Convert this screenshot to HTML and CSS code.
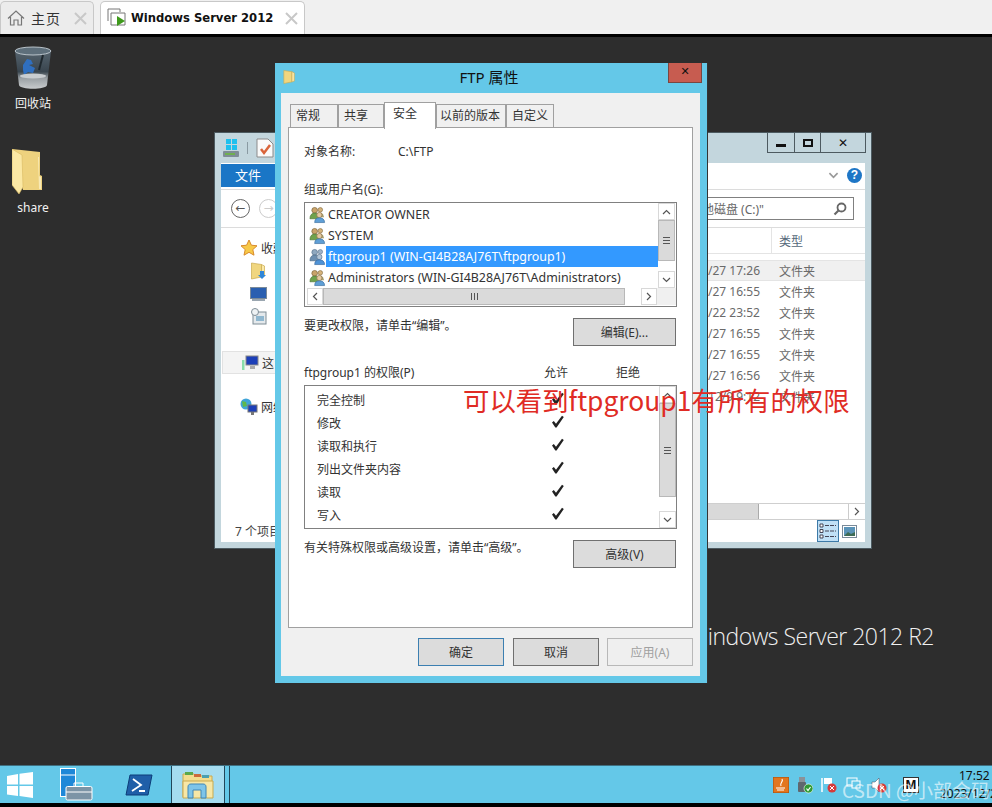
FILE: index.html
```html
<!DOCTYPE html>
<html lang="zh">
<head>
<meta charset="utf-8">
<title>Windows Server 2012</title>
<link rel="stylesheet" href="styles.css">
</head>
<body>
<svg class="defs" width="0" height="0">
  <defs>
    <linearGradient id="bin-body" x1="0" y1="0" x2="0" y2="1">
      <stop offset="0" stop-color="#55636e"/>
      <stop offset=".55" stop-color="#39454e"/>
      <stop offset=".72" stop-color="#9aa0a4"/>
      <stop offset="1" stop-color="#c8cbcd"/>
    </linearGradient>
    <symbol id="group" viewBox="0 0 18 18">
      <circle cx="6" cy="4" r="3" fill="#c9a36a" stroke="#7a6136" stroke-width=".7"/>
      <path d="M1 13c0-4 2-6 5-6s5 2 5 6z" fill="#6fa24c" stroke="#4c7333" stroke-width=".7"/>
      <circle cx="12" cy="3.5" r="2.4" fill="#d4b27a" stroke="#7a6136" stroke-width=".6"/>
      <path d="M9 7.500c1-1 5-1.500 6 1l1 3H11z" fill="#a8a070"/>
      <circle cx="11" cy="9" r="2.800" fill="#e3c9a0" stroke="#8a6d45" stroke-width=".7"/>
      <path d="M6 17c0-3.500 2-5 5-5s5.500 1.500 5.500 5z" fill="#5f9fd6" stroke="#3b6f9f" stroke-width=".7"/>
    </symbol>
    <symbol id="group-sel" viewBox="0 0 18 18">
      <circle cx="6" cy="4" r="3" fill="#8fa8bf" stroke="#56708a" stroke-width=".7"/>
      <path d="M1 13c0-4 2-6 5-6s5 2 5 6z" fill="#6d8fb0" stroke="#4a6885" stroke-width=".7"/>
      <circle cx="12" cy="3.5" r="2.400" fill="#9fb3c6" stroke="#56708a" stroke-width=".6"/>
      <circle cx="11" cy="9" r="2.800" fill="#b3c5d6" stroke="#56708a" stroke-width=".7"/>
      <path d="M6 17c0-3.500 2-5 5-5s5.500 1.500 5.500 5z" fill="#4f93d6" stroke="#36689f" stroke-width=".7"/>
    </symbol>
    <symbol id="check" viewBox="0 0 14 14">
      <path d="M1 7.500 2.800 6 5 8.800 11 .8 12.800 2 5.600 12.500H4.300z" fill="#222"/>
    </symbol>
    <symbol id="up" viewBox="0 0 9 6"><path d="M1 5 4.500 1.500 8 5" fill="none" stroke="#555" stroke-width="1.200"/></symbol>
    <symbol id="down" viewBox="0 0 9 6"><path d="M1 1 4.500 4.500 8 1" fill="none" stroke="#555" stroke-width="1.200"/></symbol>
    <symbol id="left" viewBox="0 0 6 9"><path d="M5 1 1.500 4.500 5 8" fill="none" stroke="#555" stroke-width="1.200"/></symbol>
    <symbol id="right" viewBox="0 0 6 9"><path d="M1 1 4.500 4.500 1 8" fill="none" stroke="#555" stroke-width="1.200"/></symbol>
    <symbol id="folder" viewBox="0 0 16 18">
      <path d="M1 1 11 2.500V15L1 17z" fill="#f0d67f" stroke="#c8a94e" stroke-width=".7"/>
      <path d="M11 2.500 14 4V14L11 15z" fill="#fbe9a8" stroke="#c8a94e" stroke-width=".7"/>
    </symbol>
  </defs>
</svg>

<header class="tabbar">
  <div class="tab tab-home">
    <svg class="tab-icon" width="18" height="18" viewBox="0 0 18 18"><path d="M1 9.500 9 2l8 7.500M3.500 8v8H7v-5h4v5h3.500V8" fill="none" stroke="#777" stroke-width="1.200"/></svg>
    <span class="tab-title-home">主页</span>
    <svg class="tab-x" width="13" height="13" viewBox="0 0 13 13"><path d="M1 1l11 11M12 1 1 12" stroke="#c8c8c8" stroke-width="2"/></svg>
  </div>
  <div class="tab tab-active">
    <svg class="tab-icon" width="20" height="20" viewBox="0 0 20 20"><path d="M1 13V1h12v3" fill="none" stroke="#777" stroke-width="1"/><path d="M4 17V5h14v12z" fill="#fff" stroke="#777" stroke-width="1"/><path d="M10 8v10l8-5z" fill="#3f9a1c"/></svg>
    <span class="tab-title">Windows Server 2012</span>
    <svg class="tab-x" width="13" height="13" viewBox="0 0 13 13"><path d="M1 1l11 11M12 1 1 12" stroke="#c8c8c8" stroke-width="2"/></svg>
  </div>
</header>

<main class="desktop">
  <div class="desk-icon desk-bin">
    <svg width="38" height="45" viewBox="0 0 38 45">
      <path d="M1 5 5 39c1 5 27 5 28 0L37 5z" fill="url(#bin-body)"/>
      <ellipse cx="19" cy="5" rx="18" ry="4" fill="#5e6f7b" stroke="#b9c3ca"/>
      <path d="M9 19l4-6 4 1 2 4-4 1 6 3-2 5-5-1-4 3-1-5z" fill="#2f6fc0"/>
      <path d="M29 9 25 24" stroke="#1f282e" stroke-width="2"/>
      <ellipse cx="19" cy="30" rx="13" ry="2.500" fill="#c9cdd0"/>
    </svg>
    <span>回收站</span>
  </div>
  <div class="desk-icon desk-share">
    <svg width="32" height="46" viewBox="0 0 32 46">
      <path d="M0 0 28 3V26L30 27V41H11z" fill="#eed27e"/>
      <path d="M27 8V27L29 28V40H27L26 8z" fill="#f8e9b4"/>
      <path d="M0 0 10 6 11 38 7 45 0 36z" fill="#fbe8a4" stroke="#d8b85f" stroke-width=".6"/>
    </svg>
    <span>share</span>
  </div>

  <section class="explorer">
    <div class="ex-title">
      <svg class="ex-qa" width="18" height="20" viewBox="0 0 18 20"><path d="M4 1h5v5H4zM10 1h5v5h-5zM4 7h5v5H4zM10 7h5v5h-5z" fill="#1ec0ee"/><rect x="1" y="13" width="16" height="6" rx="1" fill="#7e8d96"/><rect x="3" y="15" width="10" height="2" fill="#6fb050"/></svg>
      <span class="ex-sep"></span>
      <svg width="18" height="20" viewBox="0 0 18 20"><path d="M1 1h11l5 5v13H1z" fill="#fafafa" stroke="#8b8b8b"/><path d="M5 11l3 4 6-8" fill="none" stroke="#d9643a" stroke-width="2.500"/></svg>
      <div class="ex-btns">
        <span class="ex-btn ex-min"><i></i></span>
        <span class="ex-btn ex-max"><i></i></span>
        <span class="ex-btn ex-close">✕</span>
      </div>
    </div>
    <div class="ex-body">
      <div class="ex-ribbon">
        <span class="ex-file">文件</span>
        <svg class="ex-chev" width="11" height="7" viewBox="0 0 9 6"><path d="M1 1 4.500 4.500 8 1" fill="none" stroke="#999" stroke-width="1.400"/></svg>
        <span class="ex-help">?</span>
      </div>
      <div class="ex-address">
        <span class="nav-circle">←</span>
        <span class="nav-circle nav-off">→</span>
        <div class="ex-search">
          <span>本地磁盘 (C:)"</span>
          <svg width="14" height="14" viewBox="0 0 14 14"><circle cx="8.500" cy="5.500" r="4" fill="none" stroke="#666" stroke-width="1.800"/><path d="M5.500 8.500 1.500 12.500" stroke="#666" stroke-width="2.200"/></svg>
        </div>
      </div>
      <div class="ex-main">
        <nav class="ex-nav">
          <div class="nav-row nav-top">
            <svg width="18" height="17" viewBox="0 0 18 17"><path d="M9 1l2.400 5.200 5.600.6-4.200 3.800 1.200 5.600L9 13.300 4 16.200l1.200-5.600L1 6.800l5.600-.6z" fill="#f7c948" stroke="#d88a2c"/></svg>
            <span>收藏夹</span>
          </div>
          <div class="nav-row nav-sub">
            <svg width="17" height="18" viewBox="0 0 17 18"><use href="#folder"/><path d="M10 9h4v4h2l-4 4-4-4h2z" fill="#2f86d8"/></svg>
          </div>
          <div class="nav-row nav-sub">
            <svg width="17" height="14" viewBox="0 0 17 14"><rect x=".5" y=".5" width="16" height="11" fill="#2a5fb0" stroke="#7a8a99"/><rect x="2" y="12" width="13" height="2" fill="#9aa6b0"/></svg>
          </div>
          <div class="nav-row nav-sub">
            <svg width="17" height="17" viewBox="0 0 17 17"><rect x="3" y="4" width="13" height="12" fill="#e4e9ec" stroke="#7f8d96"/><circle cx="5" cy="4" r="3.500" fill="#eef2f4" stroke="#7f8d96"/><rect x="6" y="8" width="8" height="5" fill="#8fb7cf"/></svg>
          </div>
          <div class="nav-row nav-pc">
            <svg width="18" height="16" viewBox="0 0 18 16"><rect x="5" y="1" width="12" height="9" fill="#1c3fb8" stroke="#888"/><rect x="9" y="11" width="5" height="3" fill="#aaa"/><rect x="1" y="5" width="2.500" height="10" fill="#8da"/></svg>
            <span>这台电脑</span>
          </div>
          <div class="nav-row nav-net">
            <svg width="18" height="18" viewBox="0 0 18 18"><circle cx="6" cy="6" r="5.500" fill="#3fa4d8"/><path d="M2 3l4 1 1 4-4 1z" fill="#5fb84a"/><rect x="8" y="7" width="9" height="7" fill="#1c3fb8" stroke="#777"/><rect x="11" y="14" width="3" height="3" fill="#777"/></svg>
            <span>网络</span>
          </div>
        </nav>
        <div class="ex-files">
          <div class="ex-head"><span class="ex-col-date">修改日期</span><span class="ex-col-type">类型</span></div>
          <ul class="ex-rows">
            <li class="ex-row ex-row-sel"><span class="ex-date">2023/12/27 17:26</span><span>文件夹</span></li>
            <li class="ex-row"><span class="ex-date">2023/12/27 16:55</span><span>文件夹</span></li>
            <li class="ex-row"><span class="ex-date ex-date-s">2013/8/22 23:52</span><span>文件夹</span></li>
            <li class="ex-row"><span class="ex-date">2023/12/27 16:55</span><span>文件夹</span></li>
            <li class="ex-row"><span class="ex-date">2023/12/27 16:55</span><span>文件夹</span></li>
            <li class="ex-row"><span class="ex-date">2023/12/27 16:56</span><span>文件夹</span></li>
            <li class="ex-row"><span class="ex-date">2023/12/9 9:12</span><span>文件夹</span></li>
          </ul>
          <div class="ex-hscroll">
            <span class="ex-hthumb"></span>
            <span class="ex-hbtn"><svg width="6" height="9"><use href="#right"/></svg></span>
          </div>
        </div>
      </div>
      <div class="ex-status">
        <span class="ex-count">7 个项目</span>
        <span class="view-btn view-on">
          <svg width="18" height="16" viewBox="0 0 18 16"><path d="M1 1h3v3H1zM1 6.500h3v3H1zM1 12h3v3H1z" fill="#fff" stroke="#445"/><path d="M6 2.500h11M6 8h11M6 13.500h11" stroke="#445" stroke-dasharray="4 1"/></svg>
        </span>
        <span class="view-btn view-img">
          <svg width="15" height="13" viewBox="0 0 15 13"><rect x=".5" y=".5" width="14" height="12" fill="#fff" stroke="#7a8a99"/><rect x="2" y="2" width="11" height="9" fill="#5a93b8"/><path d="M2 11l4-4 3 2 4-2v4z" fill="#3e6b54"/></svg>
        </span>
      </div>
    </div>
  </section>

  <div class="brand">Windows Server 2012 R2</div>

  <section class="dialog">
    <div class="dlg-title">
      <svg class="dlg-icon" width="13" height="16" viewBox="0 0 16 18"><use href="#folder"/></svg>
      <span class="dlg-name">FTP 属性</span>
      <span class="dlg-close">✕</span>
    </div>
    <div class="dlg-client">
      <div class="tabs">
        <span class="dtab dtab-a">常规</span>
        <span class="dtab dtab-b">共享</span>
        <span class="dtab dtab-on">安全</span>
        <span class="dtab dtab-c">以前的版本</span>
        <span class="dtab dtab-d">自定义</span>
      </div>
      <div class="panel">
        <div class="obj-row"><span class="obj-label">对象名称:</span><span>C:\FTP</span></div>
        <div class="lbl-group">组或用户名(G):</div>
        <div class="listbox users">
          <div class="users-top">
            <ul class="user-rows">
              <li class="user"><svg width="17" height="18"><use href="#group"/></svg><span class="user-name">CREATOR OWNER</span></li>
              <li class="user"><svg width="17" height="18"><use href="#group"/></svg><span class="user-name">SYSTEM</span></li>
              <li class="user"><svg width="17" height="18"><use href="#group-sel"/></svg><span class="user-name user-sel">ftpgroup1 (WIN-GI4B28AJ76T\ftpgroup1)</span></li>
              <li class="user"><svg width="17" height="18"><use href="#group"/></svg><span class="user-name">Administrators (WIN-GI4B28AJ76T\Administrators)</span></li>
            </ul>
            <div class="vscroll vs-users">
              <span class="sb-btn"><svg width="9" height="6"><use href="#up"/></svg></span>
              <span class="sb-thumb sb-thumb-users"><i></i></span>
              <span class="sb-track"></span>
              <span class="sb-btn"><svg width="9" height="6"><use href="#down"/></svg></span>
            </div>
          </div>
          <div class="hscroll">
            <span class="hs-btn"><svg width="6" height="9"><use href="#left"/></svg></span>
            <span class="hs-thumb"><i></i></span>
            <span class="hs-track"></span>
            <span class="hs-btn"><svg width="6" height="9"><use href="#right"/></svg></span>
            <span class="hs-corner"></span>
          </div>
        </div>
        <div class="action-row">
          <span class="action-text">要更改权限，请单击“编辑”。</span>
          <span class="btn btn-wide">编辑(E)...</span>
        </div>
        <div class="perm-head">
          <span class="perm-title">ftpgroup1 的权限(P)</span>
          <span class="perm-allow">允许</span>
          <span>拒绝</span>
        </div>
        <div class="listbox perms">
          <ul class="perm-rows">
            <li class="perm"><span class="perm-name">完全控制</span><svg width="14" height="14"><use href="#check"/></svg></li>
            <li class="perm"><span class="perm-name">修改</span><svg width="14" height="14"><use href="#check"/></svg></li>
            <li class="perm"><span class="perm-name">读取和执行</span><svg width="14" height="14"><use href="#check"/></svg></li>
            <li class="perm"><span class="perm-name">列出文件夹内容</span><svg width="14" height="14"><use href="#check"/></svg></li>
            <li class="perm"><span class="perm-name">读取</span><svg width="14" height="14"><use href="#check"/></svg></li>
            <li class="perm"><span class="perm-name">写入</span><svg width="14" height="14"><use href="#check"/></svg></li>
          </ul>
          <div class="vscroll vs-perms">
            <span class="sb-btn"><svg width="9" height="6"><use href="#up"/></svg></span>
            <span class="sb-thumb sb-thumb-perms"><i></i></span>
            <span class="sb-track"></span>
            <span class="sb-btn"><svg width="9" height="6"><use href="#down"/></svg></span>
          </div>
        </div>
        <div class="action-row">
          <span class="action-text">有关特殊权限或高级设置，请单击“高级”。</span>
          <span class="btn btn-wide">高级(V)</span>
        </div>
      </div>
      <div class="dlg-foot">
        <span class="btn btn-foot btn-default">确定</span>
        <span class="btn btn-foot">取消</span>
        <span class="btn btn-foot btn-disabled">应用(A)</span>
      </div>
    </div>
  </section>

  <div class="note">可以看到ftpgroup1有所有的权限</div>
</main>

<footer class="taskbar">
  <svg class="tb-start" width="28" height="26" viewBox="0 0 28 26"><path d="M1 4l11-2v10.500H1zM13.500 1.800 27 0v12.500H13.500zM1 14h11v10L1 22.500zM13.500 14H27v12l-13.500-2z" fill="#fff"/></svg>
  <svg class="tb-server" width="33" height="33" viewBox="0 0 33 33"><rect x=".5" y=".5" width="15" height="28" fill="#1e88d8" stroke="#fff"/><path d="M1 7h14" stroke="#fff"/><rect x="6" y="18.500" width="26" height="13.500" rx="1.500" fill="#7c94a6" stroke="#fff"/><path d="M14 18v-3h9v3M6 24h26" fill="none" stroke="#fff"/></svg>
  <svg class="tb-ps" width="28" height="22" viewBox="0 0 28 22"><path d="M5 1h22l-4 20H1z" fill="#1f5fa8" stroke="#0c3d78"/><path d="M8 5l8 6-9 6M14 17h6" fill="none" stroke="#fff" stroke-width="1.800"/></svg>
  <div class="tb-active">
    <svg width="32" height="29" viewBox="0 0 32 29"><path d="M1 4h11l2 2h16v21H1z" fill="#f3dd8f" stroke="#c9a94f"/><path d="M3 2h8v3H3z" fill="#5ba84a"/><path d="M12 4h7v3h-7z" fill="#cc6a3c"/><path d="M20 5h7v3h-7z" fill="#4b9fb0"/><path d="M1 11h30v17H1z" fill="#f7e7a6" stroke="#c9a94f"/><path d="M6 28V17c0-2 1-3 3-3h12c2 0 3 1 3 3v11h-5v-8h-8v8z" fill="#7ec4e8" stroke="#3f86b8"/></svg>
  </div>
  <span class="tb-rule"></span>
  <div class="tray">
    <svg class="tr-java" width="16" height="16" viewBox="0 0 16 16"><rect width="16" height="16" rx="1" fill="#e2761e" stroke="#a04c0c"/><path d="M9 2c2 3-3 4-1 7M3 11h9M4 13h7" fill="none" stroke="#fff" stroke-width="1.200"/></svg>
    <svg class="tr-usb" width="16" height="18" viewBox="0 0 16 18"><rect x="2" y="1" width="6" height="5" fill="#8a9299"/><rect x="1" y="6" width="8" height="10" rx="1" fill="#5f676e"/><circle cx="11.500" cy="12.500" r="4.500" fill="#2f9a35" stroke="#fff" stroke-width=".6"/><path d="M9.500 12.500l1.500 2 2.500-3.500" fill="none" stroke="#fff" stroke-width="1.200"/></svg>
    <svg class="tr-flag" width="16" height="16" viewBox="0 0 16 16"><path d="M1 1v14" stroke="#fff" stroke-width="1.500"/><path d="M3 1h8v6H3z" fill="#fff"/><circle cx="11" cy="11" r="4.500" fill="#d63a3a"/><path d="M9 9l4 4M13 9l-4 4" stroke="#fff"/></svg>
    <svg class="tr-net" width="16" height="16" viewBox="0 0 16 16"><rect x="1" y="1" width="10" height="8" fill="none" stroke="#fff"/><rect x="6" y="4" width="8" height="7" fill="#64c8e8" stroke="#fff"/></svg>
    <svg class="tr-sound" width="16" height="16" viewBox="0 0 16 16"><path d="M1 5h3l4-4v14l-4-4H1z" fill="#fff" stroke="#445" stroke-width=".5"/><circle cx="11" cy="11" r="4.500" fill="#d63a3a"/><path d="M9 9l4 4M13 9l-4 4" stroke="#fff"/></svg>
    <span class="tr-m">M</span>
  </div>
  <div class="clock"><span class="clock-time">17:52</span><span class="clock-date">2023/12/27</span></div>
  <span class="watermark">CSDN @小部会码</span>
</footer>
</body>
</html>
```
FILE: styles.css
```css
* { box-sizing: border-box; }
html, body { margin: 0; padding: 0; }
body {
  width: 992px;
  height: 807px;
  overflow: hidden;
  position: relative;
  display: flex;
  flex-direction: column;
  background: #000;
  font-family: "Noto Sans", "Noto Sans CJK SC", sans-serif;
  font-size: 12px;
  color: #333;
}
ul { list-style: none; margin: 0; padding: 0; }
.defs { position: absolute; }

/* VM tabs */
.tabbar {
  height: 34px;
  flex: none;
  background: #f0f0f0;
  display: flex;
  align-items: flex-end;
  gap: 6px;
}
.tab {
  height: 33px;
  display: flex;
  align-items: center;
  border: 1px solid #c8c8c8;
  border-bottom: 0;
  border-radius: 5px 5px 0 0;
}
.tab-home { width: 94px; background: #ececec; padding-left: 6px; }
.tab-active { width: 205px; background: #fff; padding-left: 6px; }
.tab-icon { flex: none; }
.tab-title-home { margin-left: 6px; font: 14px "Noto Sans CJK SC", sans-serif; letter-spacing: 1px; color: #333; }
.tab-title { margin-left: 4px; font: bold 11.6px "DejaVu Sans", sans-serif; color: #111; white-space: nowrap; }
.tab-x { flex: none; margin-left: auto; margin-right: 6px; }

/* desktop canvas */
.desktop {
  position: relative;
  flex: none;
  margin-top: 3px;
  height: 728px;
  background: #2d2d2d;
  overflow: hidden;
}
.desk-icon {
  position: absolute;
  display: flex;
  flex-direction: column;
  align-items: center;
  width: 60px;
  color: #f2f2f2;
  font-size: 12px;
  line-height: 16px;
}
.desk-bin { left: 3px; top: 9px; }
.desk-bin span { margin-top: 5px; }
.desk-share { left: 3px; top: 112px; }
.desk-share svg { margin-right: 10px; }
.desk-share span { margin-top: 5px; }

/* explorer behind */
.explorer {
  position: absolute;
  left: 214px;
  top: 95px;
  width: 658px;
  height: 417px;
  background: #c3d6dd;
  border: 1px solid #4c5a60;
  padding: 0 6px 6px;
  display: flex;
  flex-direction: column;
  color: #444;
}
.ex-title { height: 30px; flex: none; display: flex; align-items: center; padding-left: 1px; }
.ex-sep { width: 1px; height: 12px; background: #8a9aa2; margin: 0 8px 0 7px; }
.ex-btns { margin-left: auto; margin-right: -1px; margin-bottom: 9px; align-self: flex-start; display: flex; }
.ex-btn {
  height: 20px;
  border: 1px solid #4d5a60;
  border-top: 0;
  margin-left: -1px;
  display: flex;
  align-items: center;
  justify-content: center;
  color: #111;
}
.ex-min { width: 28px; margin-left: 0; }
.ex-min i { width: 10px; height: 3px; background: #111; margin-top: 6px; }
.ex-max { width: 27px; }
.ex-max i { width: 10px; height: 8px; border: 2px solid #111; }
.ex-close { width: 46px; font: bold 12px "DejaVu Sans", sans-serif; }
.ex-body { flex: 1; background: #fff; display: flex; flex-direction: column; min-height: 0; }
.ex-ribbon {
  height: 27px;
  flex: none;
  display: flex;
  align-items: flex-start;
  border-bottom: 1px solid #dcdcdc;
}
.ex-file {
  width: 54px;
  height: 23px;
  margin-top: 1px;
  background: #1a76c6;
  color: #fff;
  text-align: center;
  font-size: 13px;
  line-height: 22px;
}
.ex-chev { margin: 9px 0 0 auto; }
.ex-help {
  width: 15px;
  height: 15px;
  margin: 5px 3px 0 8px;
  border-radius: 50%;
  background: #1e76c6;
  color: #fff;
  font: bold 12px/15px "Liberation Sans", sans-serif;
  text-align: center;
}
.ex-address {
  height: 38px;
  flex: none;
  display: flex;
  align-items: center;
  padding-left: 10px;
  border-bottom: 1px solid #dcdcdc;
}
.nav-circle {
  width: 19px;
  height: 19px;
  border-radius: 50%;
  border: 1px solid #666;
  font: 12px/16px "DejaVu Sans", sans-serif;
  text-align: center;
  margin-right: 9px;
  color: #555;
}
.nav-off { border-color: #ccc; color: #ccc; }
.ex-search {
  margin-left: auto;
  margin-right: 11px;
  width: 300px;
  height: 23px;
  border: 1px solid #808080;
  display: flex;
  align-items: center;
  justify-content: flex-end;
  padding-right: 6px;
  gap: 69px;
  color: #666;
}
.ex-main { flex: 1; display: flex; min-height: 0; }
.ex-nav { width: 300px; flex: none; padding-top: 8px; font-size: 12px; color: #333; }
.nav-row { display: flex; align-items: center; gap: 3px; white-space: nowrap; height: 23px; }
.nav-top { padding-left: 19px; }
.nav-sub { padding-left: 29px; }
.nav-pc {
  margin-top: 23px;
  margin-left: 1px;
  padding-left: 18px;
  background: #f4f4f4;
  border: 1px solid #e2e2e2;
}
.nav-net { margin-top: 21px; padding-left: 19px; }
.ex-files { flex: 1; display: flex; flex-direction: column; min-width: 0; }
.ex-head {
  height: 26px;
  flex: none;
  display: flex;
  align-items: center;
  border-bottom: 1px solid #e4e4e4;
  color: #55687a;
}
.ex-col-date { width: 251px; height: 100%; line-height: 24px; border-right: 1px solid #e4e4e4; padding-left: 130px; white-space: nowrap; }
.ex-col-type { padding-left: 7px; }
.ex-rows { flex: 1; padding-top: 6px; color: #6a6a6a; }
.ex-row { height: 21px; display: flex; align-items: center; white-space: nowrap; }
.ex-row-sel { background: #f0f0f0; border-top: 1px solid #e4e4e4; border-bottom: 1px solid #e4e4e4; }
.ex-date { width: 239px; margin-right: 19px; text-align: right; font-size: 12px; flex: none; }
.ex-hscroll {
  height: 17px;
  flex: none;
  display: flex;
  border-top: 1px solid #cfcfcf;
  border-bottom: 1px solid #cfcfcf;
}
.ex-hthumb { width: 238px; background: #d9d9d9; border-right: 1px solid #aaa; }
.ex-hbtn { margin-left: auto; margin-right: 1px; width: 16px; display: flex; align-items: center; justify-content: center; border-left: 1px solid #ccc; }
.ex-status { height: 22px; flex: none; display: flex; align-items: center; }
.ex-count { margin-left: 14px; margin-right: auto; color: #444; }
.view-btn { height: 22px; display: flex; align-items: center; justify-content: center; }
.view-on { width: 22px; background: #c0e0f6; border: 1px solid #3d7aa8; }
.view-img { width: 21px; margin-right: 5px; }

.brand {
  position: absolute;
  right: 58px;
  top: 583px;
  color: #f0f0f0;
  font: 300 23px/32px "Open Sans", sans-serif;
  letter-spacing: -0.5px;
  white-space: nowrap;
}

/* dialog */
.dialog {
  position: absolute;
  left: 275px;
  top: 26px;
  width: 433px;
  height: 620px;
  background: #64c8e8;
  border-right: 1px solid #333;
  padding: 0 7px 7px 6px;
  display: flex;
  flex-direction: column;
}
.dlg-title {
  height: 30px;
  flex: none;
  position: relative;
  display: flex;
  align-items: center;
  justify-content: center;
  color: #111;
  font-size: 15px;
  line-height: 27px;
  padding-bottom: 2px;
}
.dlg-icon { position: absolute; left: 2px; top: 6px; }
.dlg-name { margin-right: 3px; }
.dlg-close {
  position: absolute;
  right: -2px;
  top: 0;
  width: 34px;
  height: 20px;
  background: #c75c50;
  border: 1px solid #7a4640;
  border-top: 0;
  color: #111;
  font: bold 11px/18px "DejaVu Sans", sans-serif;
  text-align: center;
}
.dlg-client {
  flex: 1;
  background: #f0f0f0;
  padding: 0 7px 10px;
  display: flex;
  flex-direction: column;
}
.tabs { display: flex; height: 34px; padding: 9px 0 0 2px; flex: none; align-items: flex-end; }
.dtab {
  height: 24px;
  margin-bottom: -1px;
  border: 1px solid #a0a0a0;
  border-bottom: 0;
  background: #f0f0f0;
  line-height: 22px;
  padding-left: 5px;
  white-space: nowrap;
  color: #333;
}
.dtab-a { width: 48px; }
.dtab-b { width: 46px; }
.dtab-c { width: 70px; padding-left: 3px; }
.dtab-d { width: 48px; }
.dtab-on {
  width: 52px;
  height: 27px;
  background: #fff;
  position: relative;
  z-index: 1;
  padding-left: 8px;
  margin-bottom: -2px;
  line-height: 21px;
}
.panel {
  height: 501px;
  flex: none;
  background: #fff;
  border: 1px solid #a0a0a0;
  padding: 14px 15px 0;
}
.obj-row { height: 20px; line-height: 20px; display: flex; }
.obj-label { width: 94px; }
.lbl-group { margin-top: 18px; height: 20px; line-height: 20px; }
.listbox { margin-top: 2px; border: 1px solid #808080; background: #fff; color: #333; }
.users { height: 105px; display: flex; flex-direction: column; }
.users-top { flex: 1; display: flex; min-height: 0; }
.user-rows { flex: 1; padding-top: 1px; min-width: 0; }
.user { height: 21px; display: flex; align-items: center; padding-left: 4px; }
.user svg { flex: none; }
.user-name { flex: 1; height: 21px; line-height: 21px; padding-left: 2px; font-size: 12.4px; white-space: nowrap; }
.user-sel { background: #3399ff; color: #fff; }
.vscroll { width: 17px; flex: none; display: flex; flex-direction: column; margin-right: 1px; }
.sb-btn { height: 17px; flex: none; display: flex; align-items: center; justify-content: center; border: 1px solid #d8d8d8; background: #fff; }
.sb-thumb { background: #dadada; border: 1px solid #b8b8b8; display: flex; align-items: center; justify-content: center; flex: none; }
.sb-thumb i { width: 7px; height: 7px; border-top: 1px solid #555; border-bottom: 1px solid #555; background: linear-gradient(#555, #555) center / 7px 1px no-repeat; }
.sb-thumb-users { height: 41px; }
.sb-thumb-perms { height: 94px; }
.sb-track { flex: 1; background: #fff; }
.hscroll { height: 17px; flex: none; display: flex; margin: 0 0 1px; }
.hs-btn { width: 16px; flex: none; display: flex; align-items: center; justify-content: center; border: 1px solid #d8d8d8; background: #fff; }
.hs-btn:first-child { margin-left: 2px; }
.hs-thumb { width: 302px; background: #dadada; border: 1px solid #b8b8b8; display: flex; align-items: center; justify-content: center; }
.hs-thumb i { width: 7px; height: 7px; border-left: 1px solid #555; border-right: 1px solid #555; background: linear-gradient(#555, #555) center / 1px 7px no-repeat; }
.hs-track { flex: 1; }
.hs-corner { width: 19px; flex: none; background: #f0f0f0; }
.action-row { display: flex; justify-content: space-between; align-items: flex-start; margin-top: 11px; padding-right: 1px; }
.action-text { line-height: 16px; color: #333; }
.btn {
  height: 28px;
  display: flex;
  align-items: center;
  justify-content: center;
  background: #dcdcdc;
  border: 1px solid #707070;
  color: #333;
}
.btn-wide { width: 103px; }
.perm-head { margin-top: 17px; height: 20px; line-height: 20px; display: flex; }
.perm-title { width: 240px; }
.perm-allow { width: 72px; }
.perms { height: 144px; display: flex; }
.perm-rows { flex: 1; padding-top: 2px; min-width: 0; }
.perm { height: 23px; display: flex; align-items: center; padding-left: 12px; }
.perm svg { flex: none; margin-bottom: 2px; }
.perm-name { width: 234px; flex: none; }
.vs-perms { margin-right: 0; }
.dlg-foot { margin-top: 10px; display: flex; justify-content: flex-end; gap: 8px; }
.btn-foot { width: 86px; }
.btn-default { border-color: #3c7fb1; margin-right: 1px; }
.btn-disabled { background: #efefef; border-color: #b8b8b8; color: #a0a0a0; }

.note {
  position: absolute;
  left: 463px;
  top: 344px;
  color: #e02b24;
  font: 26.4px/38px "Noto Sans CJK SC", sans-serif;
  white-space: nowrap;
}

/* taskbar */
.taskbar {
  height: 38px;
  flex: none;
  background: #64c8e8;
  border-top: 1px solid #3f6f80;
  display: flex;
  align-items: center;
  position: relative;
  overflow: hidden;
}
.taskbar > * { flex: none; }
.tb-start { margin-left: 6px; }
.tb-server { margin-left: 26px; }
.tb-ps { margin-left: 32px; }
.tb-active {
  margin-left: 18px;
  width: 54px;
  height: 100%;
  background: #a5dcf0;
  border-left: 1px solid #21465a;
  border-right: 1px solid #21465a;
  display: flex;
  align-items: center;
  justify-content: center;
}
.tb-rule { margin-left: 4px; width: 1px; height: 100%; background: #21465a; }
.tray { margin-left: 543px; display: flex; align-items: center; }
.tray > * { flex: none; }
.tr-usb { margin-left: 8px; }
.tr-flag { margin-left: 8px; }
.tr-net { margin-left: 9px; }
.tr-sound { margin-left: 9px; }
.tr-m {
  margin-left: 16px;
  width: 16px;
  height: 16px;
  background: #fff;
  border: 1px solid #333;
  color: #111;
  font: bold 13px/14px "Liberation Sans", sans-serif;
  text-align: center;
}
.clock {
  margin-left: 21px;
  width: 62px;
  display: flex;
  flex-direction: column;
  color: #111;
  line-height: 18px;
  white-space: nowrap;
}
.clock-time { padding-left: 19px; }
.watermark {
  position: absolute;
  left: 842px;
  top: 12px;
  color: rgba(255, 255, 255, .62);
  font: 19px/24px "Noto Sans CJK SC", sans-serif;
  white-space: nowrap;
}
```
